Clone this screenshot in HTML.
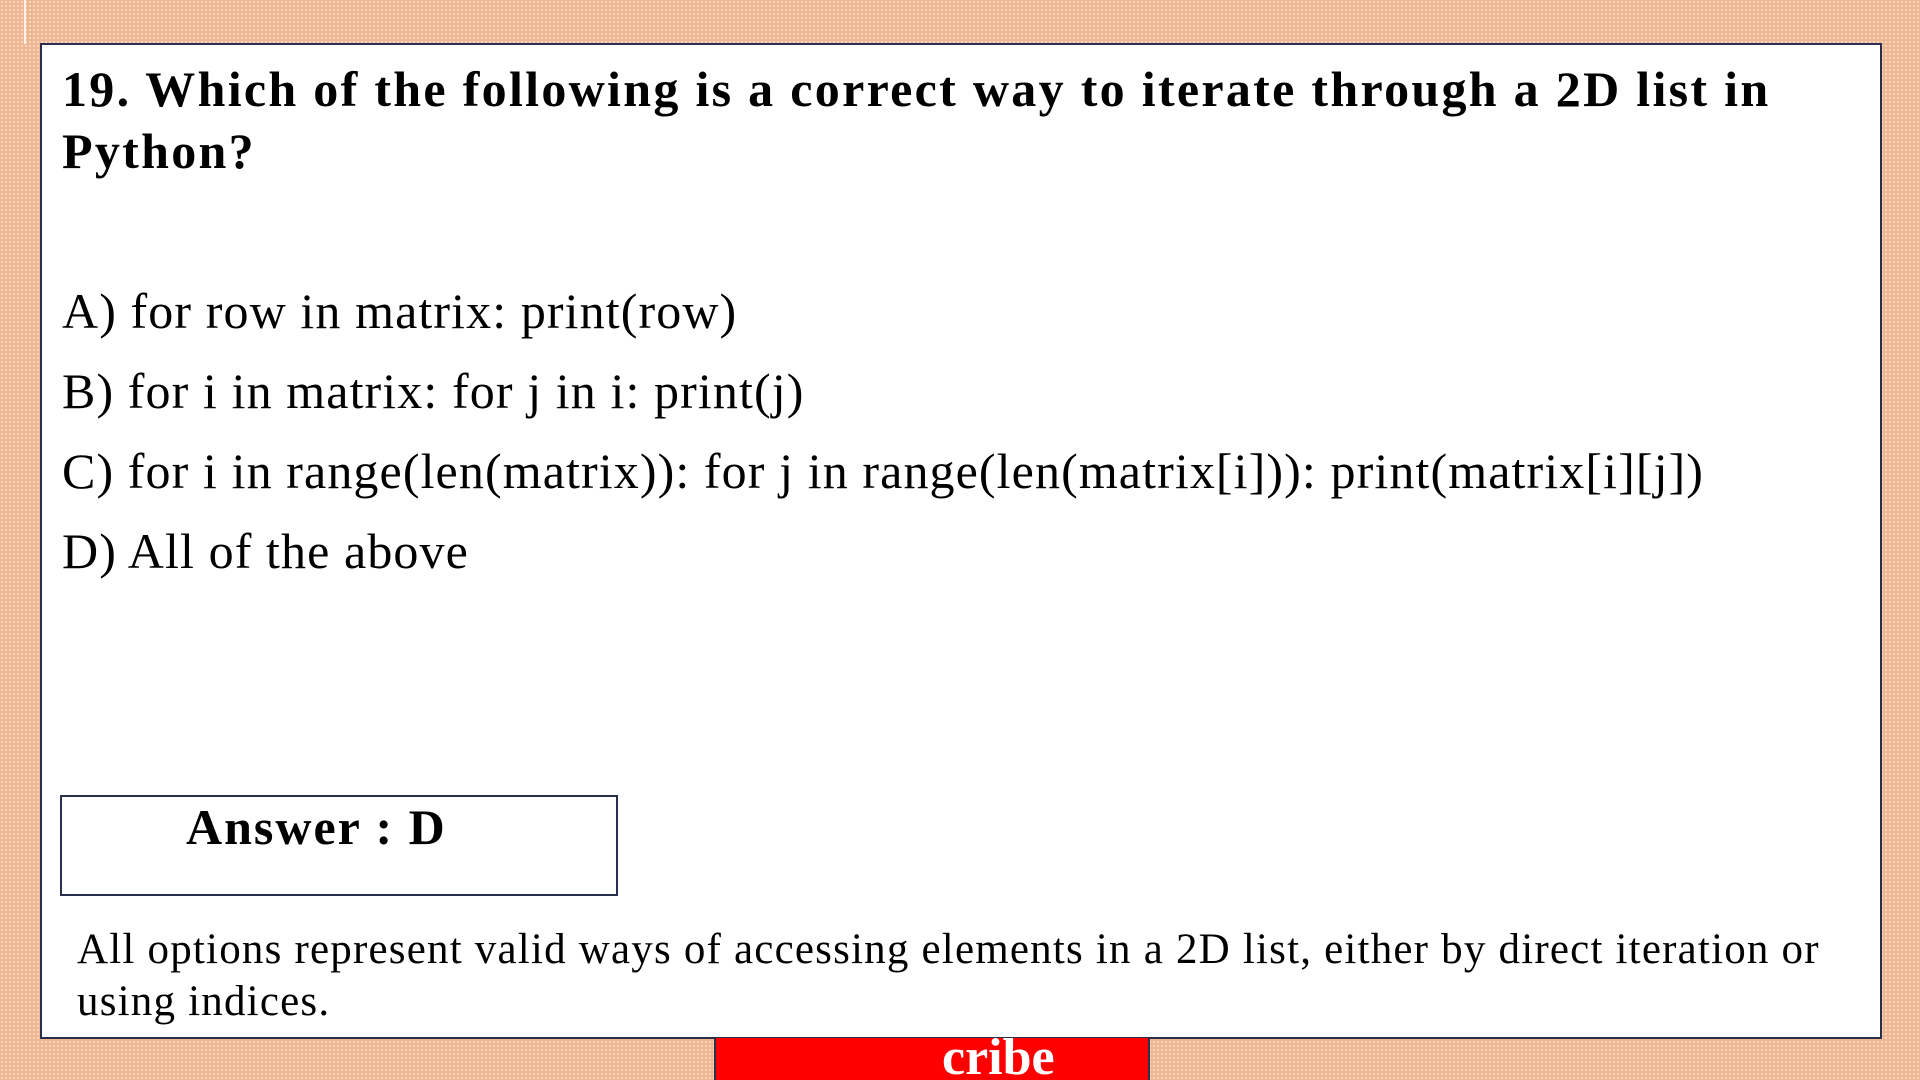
<!DOCTYPE html>
<html><head><meta charset="utf-8"><style>
html,body{margin:0;padding:0;}
body{width:1920px;height:1080px;overflow:hidden;position:relative;
background-color:#efb58f;
background-image:radial-gradient(circle at 50% 50%, rgba(255,255,255,0.55) 0.8px, transparent 1.3px);
background-size:4px 4px;}
.vl{position:absolute;left:24px;top:0;width:2px;height:44px;background:#fff;opacity:.8}
.card{position:absolute;left:40px;top:43px;width:1842px;height:996px;background:#fff;border:2px solid #2a2f4e;box-sizing:border-box;}
.t{position:absolute;font-family:"Liberation Serif",serif;color:#000;white-space:nowrap;}
.q{left:62px;top:58px;font-weight:bold;font-size:50px;line-height:62px;white-space:normal;width:1790px;letter-spacing:2.3px}
.o{left:62px;font-size:50px;letter-spacing:1.1px}
.ans{position:absolute;left:60px;top:795px;width:558px;height:101px;border:2px solid #2a2f4e;box-sizing:border-box;background:#fff}
.red{position:absolute;left:714px;top:1038px;width:436px;height:42px;background:#ff0000;border-left:2px solid #2a2f4e;border-right:2px solid #2a2f4e;box-sizing:border-box;overflow:hidden}
</style></head><body>
<div class="vl"></div>
<div class="card"></div>
<div class="t q">19. Which of the following is a correct way to iterate through a 2D list in Python?</div>
<div class="t o" style="top:282px">A) for row in matrix: print(row)</div>
<div class="t o" style="top:362px">B) for i in matrix: for j in i: print(j)</div>
<div class="t o" style="top:442px">C) for i in range(len(matrix)): for j in range(len(matrix[i])): print(matrix[i][j])</div>
<div class="t o" style="top:522px">D) All of the above</div>
<div class="ans"></div>
<div class="t" style="left:186px;top:798px;font-size:50px;font-weight:bold;letter-spacing:2px">Answer : D</div>
<div class="t" style="left:77px;top:924px;font-size:43px;line-height:52px;white-space:normal;width:1790px;letter-spacing:1.2px">All options represent valid ways of accessing elements in a 2D list, either by direct iteration or using indices.</div>
<div class="red"><div class="t" style="left:226px;top:-10px;font-size:52px;font-weight:bold;color:#fff">cribe</div></div>
</body></html>
